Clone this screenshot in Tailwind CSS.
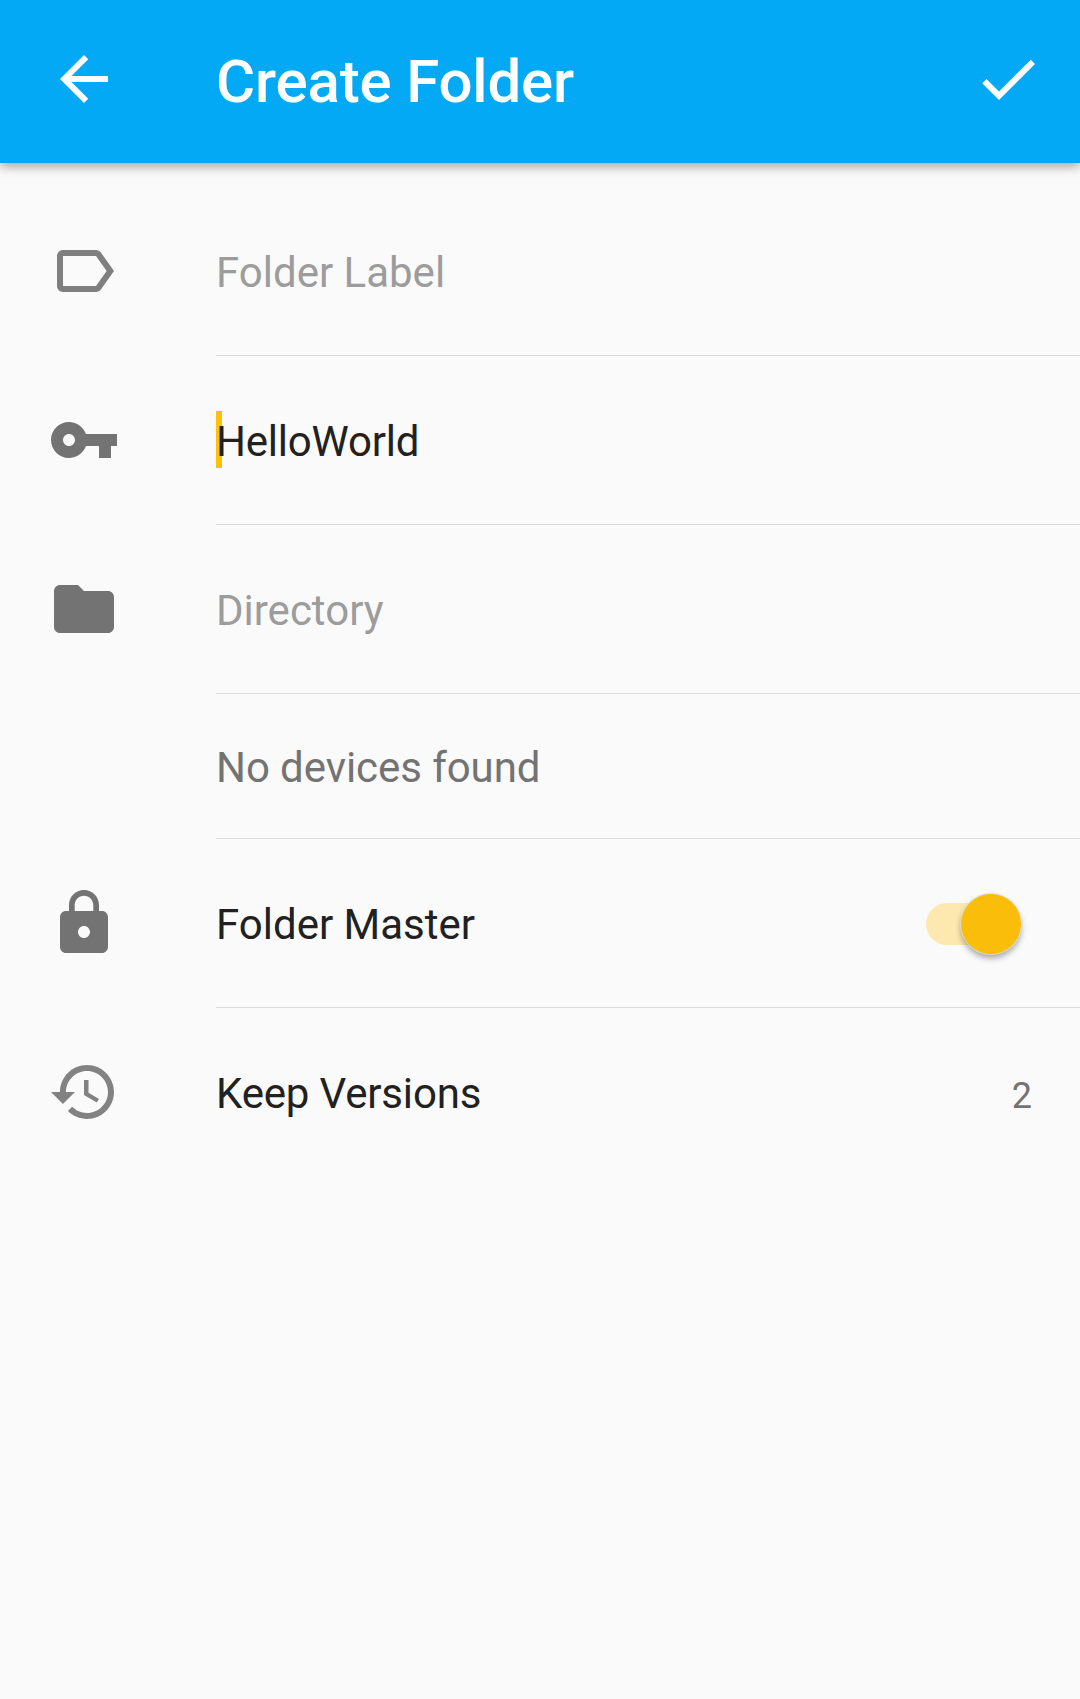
<!DOCTYPE html>
<html lang="en">
<head>
<meta charset="utf-8">
<title>Create Folder</title>
<script src="https://cdn.jsdelivr.net/npm/@tailwindcss/browser@4"></script>
</head>
<body class="h-[1699px] overflow-hidden bg-[#fafafa] font-[Roboto,sans-serif] text-[42px] leading-[56px] text-[#212121]">
<header class="flex h-[163px] items-start bg-[#03a9f4] pl-12 pr-9 pt-[43px] text-white shadow-[0_4px_10px_rgba(0,0,0,0.33)]">
  <svg class="mr-24 size-[72px] shrink-0" viewBox="0 0 24 24" fill="currentColor"><path d="M20 11H7.83l5.59-5.59L12 4l-8 8 8 8 1.41-1.41L7.83 13H20v-2z"/></svg>
  <h1 class="mt-[3px] grow text-[60px] font-medium leading-[72px] tracking-[-0.17px]">Create Folder</h1>
  <svg class="size-[72px] shrink-0" viewBox="0 0 24 24" fill="currentColor"><path d="M9 16.17L4.83 12l-1.42 1.41L9 19 21 7l-1.41-1.41z"/></svg>
</header>
<main class="pt-6">
  <div class="flex h-[169px] pl-12">
    <div class="w-[168px] shrink-0 pt-12"><svg class="size-[72px] text-[#7f7f7f]" viewBox="0 0 24 24" fill="currentColor"><path d="M17.63 5.84C17.27 5.33 16.67 5 16 5L5 5.01C3.9 5.01 3 5.9 3 7v10c0 1.1.9 1.99 2 1.99L16 19c.67 0 1.27-.33 1.63-.84L22 12l-4.37-6.16zM16 17H5V7h11l3.55 5L16 17z"/></svg></div>
    <div class="flex grow items-center border-b border-[#dcdcdc] pt-1 text-[#9c9c9c]">Folder Label</div>
  </div>
  <div class="flex h-[169px] pl-12">
    <div class="w-[168px] shrink-0 pt-12"><svg class="size-[72px] text-[#737373]" viewBox="0 0 24 24" fill="currentColor"><path d="M12.65 10C11.83 7.67 9.61 6 7 6c-3.31 0-6 2.69-6 6s2.69 6 6 6c2.61 0 4.83-1.67 5.65-4H17v4h4v-4h2v-4H12.65zM7 14c-1.1 0-2-.9-2-2s.9-2 2-2 2 .9 2 2-.9 2-2 2z"/></svg></div>
    <div class="relative flex grow items-center border-b border-[#dcdcdc] pt-1 tracking-[-0.2px]"><i class="absolute left-0 top-[55px] h-[57px] w-[6px] bg-[#ffc107]"></i><span class="relative">HelloWorld</span></div>
  </div>
  <div class="flex h-[169px] pl-12">
    <div class="w-[168px] shrink-0 pt-12"><svg class="size-[72px] text-[#737373]" viewBox="0 0 24 24" fill="currentColor"><path d="M10 4H4c-1.1 0-1.99.9-1.99 2L2 18c0 1.1.9 2 2 2h16c1.1 0 2-.9 2-2V8c0-1.1-.9-2-2-2h-8l-2-2z"/></svg></div>
    <div class="flex grow items-center border-b border-[#dcdcdc] pt-1 text-[#9c9c9c]">Directory</div>
  </div>
  <div class="ml-[216px] flex h-[145px] items-center border-b border-[#dcdcdc] pt-1 tracking-[-0.07px] text-[#737373]">No devices found</div>
  <div class="flex h-[169px] pl-12">
    <div class="w-[168px] shrink-0 pt-12"><svg class="size-[72px] text-[#737373]" viewBox="0 0 24 24" fill="currentColor"><path fill-rule="evenodd" d="M18 8h-1V6c0-2.76-2.24-5-5-5S7 3.24 7 6v2H6c-1.1 0-2 .9-2 2v10c0 1.1.9 2 2 2h12c1.1 0 2-.9 2-2V10c0-1.1-.9-2-2-2zM12 17c-1.1 0-2-.9-2-2s.9-2 2-2 2 .9 2 2-.9 2-2 2zM15.1 8H8.9V6c0-1.71 1.39-3.1 3.1-3.1s3.1 1.39 3.1 3.1v2z"/></svg></div>
    <div class="flex grow items-center justify-between border-b border-[#dcdcdc] pr-[59px] pt-1">Folder Master
      <div class="mb-[2px] flex h-[42px] w-[95px] items-center justify-end rounded-full bg-[#fde8b0]"><div class="mb-px size-[60px] shrink-0 rounded-full bg-[#fabd09] shadow-[0_0_0_1px_rgba(225,225,215,0.8),0_4px_6px_rgba(0,0,0,0.36)]"></div></div>
    </div>
  </div>
  <div class="flex h-[168px] pl-12">
    <div class="w-[168px] shrink-0 pt-12"><svg class="size-[72px] text-[#828282]" viewBox="0 0 24 24" fill="currentColor"><path d="M13 3c-4.97 0-9 4.03-9 9H1l3.89 3.89.07.14L9 12H6c0-3.87 3.13-7 7-7s7 3.13 7 7-3.13 7-7 7c-1.93 0-3.68-.79-4.94-2.06l-1.42 1.42C8.27 19.99 10.51 21 13 21c4.97 0 9-4.03 9-9s-4.03-9-9-9zm-1 5v5l4.28 2.54.72-1.21-3.5-2.08V8H12z"/></svg></div>
    <div class="flex grow items-center justify-between pr-12 pt-1"><span class="tracking-[-0.17px]">Keep Versions</span><span class="mt-1 text-[36px] text-[#737373]">2</span></div>
  </div>
</main>
</body>
</html>
